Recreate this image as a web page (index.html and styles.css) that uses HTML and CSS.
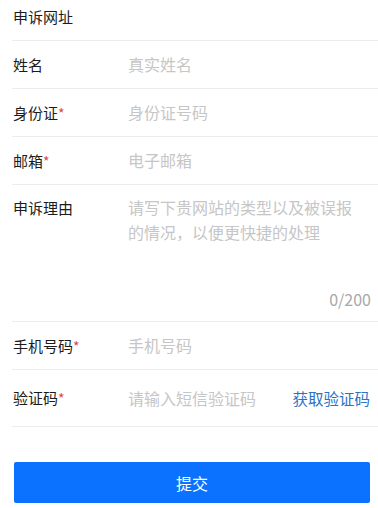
FILE: index.html
```html
<!DOCTYPE html>
<html lang="zh-CN">
<head>
<meta charset="utf-8">
<link rel="stylesheet" href="styles.css">
</head>
<body>
<form class="form">
  <div class="row">
    <span class="label">申诉网址</span>
  </div>
  <div class="row">
    <span class="label">姓名</span>
    <span class="ph">真实姓名</span>
  </div>
  <div class="row">
    <span class="label">身份证<i class="req">*</i></span>
    <span class="ph">身份证号码</span>
  </div>
  <div class="row">
    <span class="label">邮箱<i class="req">*</i></span>
    <span class="ph">电子邮箱</span>
  </div>
  <div class="row row-area">
    <span class="label">申诉理由</span>
    <div class="area">
      <span class="ph area-text">请写下贵网站的类型以及被误报的情况，以便更快捷的处理</span>
      <span class="count">0/200</span>
    </div>
  </div>
  <div class="row">
    <span class="label">手机号码<i class="req">*</i></span>
    <span class="ph">手机号码</span>
  </div>
  <div class="row row-code">
    <span class="label">验证码<i class="req">*</i></span>
    <span class="ph grow">请输入短信验证码</span>
    <span class="getcode">获取验证码</span>
  </div>
</form>
<div class="actions">
  <button class="submit" type="button">提交</button>
</div>
</body>
</html>
```
FILE: styles.css
```css
html, body {
  margin: 0;
  padding: 0;
  background: #ffffff;
  font-family: "Noto Sans CJK SC", "Noto Sans", sans-serif;
  color: #1c1c1c;
}
.form {
  margin-top: -7px;
  padding-left: 12px;
}
.row {
  display: flex;
  align-items: center;
  height: 48px;
  box-sizing: border-box;
  border-bottom: 1px solid #ececec;
}
.label {
  width: 115px;
  flex: none;
  font-size: 15px;
  line-height: 25px;
  padding-left: 1px;
}
.req {
  font-style: normal;
  color: #d9464d;
  font-size: 14px;
}
.ph {
  font-size: 16px;
  line-height: 25px;
  color: #c6c6c6;
}
.grow {
  flex: 1;
}
.row-area {
  height: 137px;
  align-items: stretch;
  padding-top: 10px;
  padding-bottom: 9px;
}
.area {
  flex: 1;
  display: flex;
  flex-direction: column;
  padding-right: 7px;
}
.area-text {
  flex: 1;
  padding-right: 4px;
}
.count {
  align-self: flex-end;
  font-size: 16px;
  line-height: 25px;
  color: #a9a9a9;
}
.row-code {
  height: 57px;
}
.getcode {
  font-size: 15.5px;
  line-height: 25px;
  color: #2b73c4;
  padding-right: 8px;
}
.actions {
  padding: 35px 8px 0 14px;
}
.submit {
  display: block;
  width: 100%;
  height: 41px;
  border: none;
  border-radius: 2px;
  background: #0a72ff;
  color: #ffffff;
  font-family: "Noto Sans CJK SC", "Noto Sans", sans-serif;
  font-size: 16px;
}
```
